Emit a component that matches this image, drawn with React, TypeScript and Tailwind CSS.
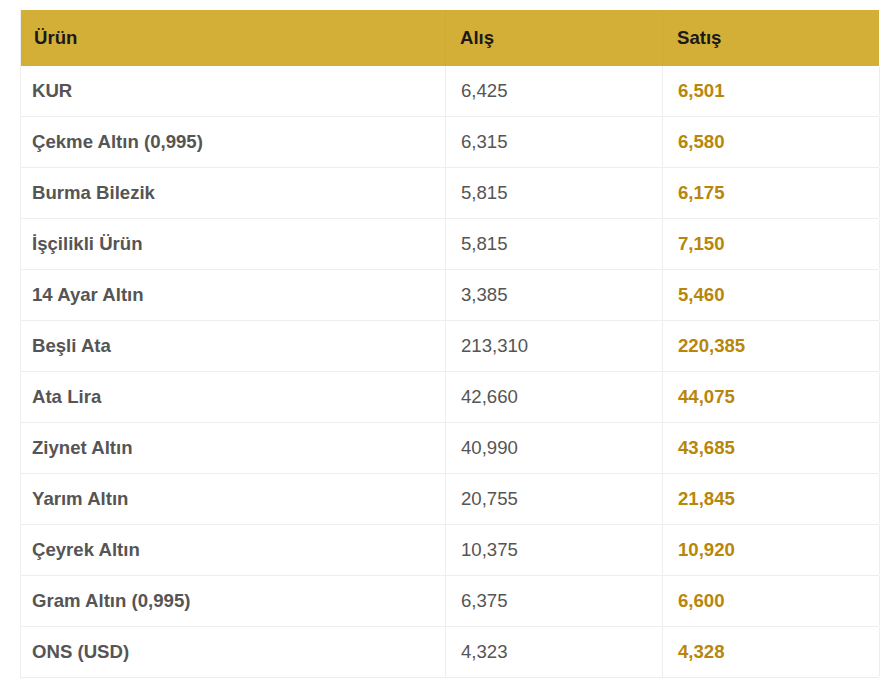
import React from 'react';

const rows: [string, string, string][] = [
  ['KUR', '6,425', '6,501'],
  ['Çekme Altın (0,995)', '6,315', '6,580'],
  ['Burma Bilezik', '5,815', '6,175'],
  ['İşçilikli Ürün', '5,815', '7,150'],
  ['14 Ayar Altın', '3,385', '5,460'],
  ['Beşli Ata', '213,310', '220,385'],
  ['Ata Lira', '42,660', '44,075'],
  ['Ziynet Altın', '40,990', '43,685'],
  ['Yarım Altın', '20,755', '21,845'],
  ['Çeyrek Altın', '10,375', '10,920'],
  ['Gram Altın (0,995)', '6,375', '6,600'],
  ['ONS (USD)', '4,323', '4,328'],
];

export default function App() {
  return (
    <div className="min-h-screen bg-white pt-[10px] pl-[20px] font-['Liberation_Sans',Arial,sans-serif]">
      <div className="w-[859px] border-l border-[#eeeeee]">
        {/* header */}
        <div className="grid grid-cols-[425px_217px_217px] h-[56px] bg-[#d4af37] text-[#1a1a1a] text-[18.6px] font-bold">
          <div className="flex items-center pl-[13px] border-r border-[#cfaa36]">Ürün</div>
          <div className="flex items-center pl-[14px] border-r border-[#cfaa36]">Alış</div>
          <div className="flex items-center pl-[14px]">Satış</div>
        </div>
        {rows.map(([name, buy, sell]) => (
          <div key={name} className="grid grid-cols-[425px_217px_217px] h-[51px] border-b border-[#eeeeee] text-[18.6px]">
            <div className="flex items-center pl-[11px] border-r border-[#eeeeee] font-bold text-[#555555]">{name}</div>
            <div className="flex items-center pl-[15px] border-r border-[#eeeeee] text-[#555555]">{buy}</div>
            <div className="flex items-center pl-[15px] border-r border-[#eeeeee] font-bold text-[#b8860b]">{sell}</div>
          </div>
        ))}
      </div>
    </div>
  );
}
